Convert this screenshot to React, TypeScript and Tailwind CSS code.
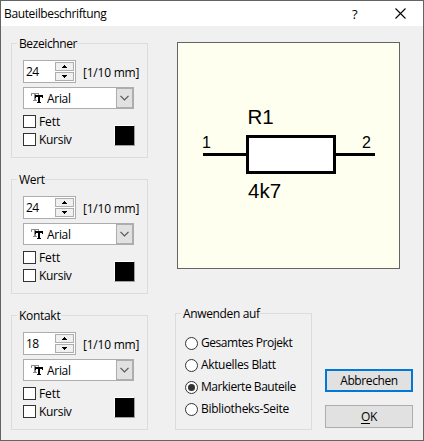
import React from "react";

function Caption({ text, className }: { text: string; className: string }) {
  return (
    <div className={`ml-[5px] -mt-[9px] mb-[-1px] h-[18px] whitespace-nowrap bg-[#f0f0f0] pl-[2px] leading-[18px] ${className}`}>
      {text}
    </div>
  );
}

function FontIcon() {
  return (
    <svg className="h-[10px] w-[12px] shrink-0" viewBox="0 0 12 10" shapeRendering="crispEdges">
      <path d="M0 0h8v3H7V1H5v6h1v1H2V7h1V1H1v2H0z" fill="#8c8c8c" />
      <path d="M4 2h8v3h-1V4H9v5h1v1H6V9h1V4H5v1H4z" fill="#000" />
    </svg>
  );
}

function SpinButton({ up }: { up?: boolean }) {
  return (
    <div className="flex h-[9px] w-[19px] items-center justify-center border border-[#adadad] bg-[#f0f0f0]">
      <svg className="h-[3px] w-[5px]" viewBox="0 0 5 3" shapeRendering="crispEdges">
        <path d={up ? "M2 0h1v1h1v1h1v1H0V2h1V1h1z" : "M0 0h5v1H4v1H3v1H2V2H1V1H0z"} fill="#000" />
      </svg>
    </div>
  );
}

function Check({ label, className }: { label: string; className: string }) {
  return (
    <label className="flex h-[13px] items-center">
      <span className="mr-[3px] h-[13px] w-[13px] border border-[#333] bg-white" />
      <span className={`leading-[13px] ${className}`}>{label}</span>
    </label>
  );
}

function FontGroup({ title, titleClass, size }: { title: string; titleClass: string; size: string }) {
  return (
    <section className="h-[115px] w-[137px] border border-[#dcdcdc]">
      <Caption text={title} className={titleClass} />
      <div className="ml-[11px] mt-[8px] flex h-[23px] items-center">
        <div className="flex h-[23px] w-[53px] items-center justify-between border border-[#abadb3] bg-white pl-[2px] pr-px">
          <span className="tracking-[-0.6px]">{size}</span>
          <div className="flex flex-col gap-px">
            <SpinButton up />
            <SpinButton />
          </div>
        </div>
        <span className="ml-[7px] mt-[2px] whitespace-nowrap tracking-[-0.23px]">[1/10 mm]</span>
      </div>
      <div className="ml-[11px] mt-[4px] flex h-[22px] w-[111px] items-center border border-[#adadad] bg-white pl-[7px]">
        <FontIcon />
        <span className="ml-[4px] mt-[2px] flex-1 tracking-[-0.3px]">Arial</span>
        <span className="flex h-[20px] w-[17px] items-center justify-center border border-[#adadad] bg-[#e1e1e1]">
          <svg className="h-[6px] w-[9px]" viewBox="0 0 9 6">
            <path d="M.5 .8l4 4 4-4" fill="none" stroke="#555" strokeWidth="1.2" />
          </svg>
        </span>
      </div>
      <div className="ml-[11px] mt-[6px] flex">
        <div className="flex w-[91px] flex-col gap-[5px]">
          <Check label="Fett" className="tracking-[-0.1px]" />
          <Check label="Kursiv" className="tracking-[-0.3px]" />
        </div>
        <span className="mt-[10px] h-[21px] w-[21px] border border-b-[#a0a0a0] border-l-white border-r-[#a0a0a0] border-t-white bg-black" />
      </div>
    </section>
  );
}

function Radio({ label, checked, className }: { label: string; checked?: boolean; className: string }) {
  return (
    <label className="flex h-[22px] items-center">
      <span className="mr-[3px] flex h-[13px] w-[13px] shrink-0 items-center justify-center rounded-full border border-[#333] bg-white">
        {checked && <span className="h-[7px] w-[7px] rounded-full bg-[#333]" />}
      </span>
      <span className={`whitespace-nowrap ${className}`}>{label}</span>
    </label>
  );
}

function Preview() {
  return (
    <div className="h-[227px] w-[223px] border border-[#646464] bg-[#fffff0]">
      <svg
        className="block h-[225px] w-[221px] font-['Liberation_Sans',Arial,sans-serif]"
        viewBox="178 43 221 225"
      >
        <path d="M203 154.500H247M335 154.500H375" stroke="#000" strokeWidth="3" />
        <rect x="247.500" y="136.500" width="87" height="36" fill="#fff" stroke="#000" strokeWidth="3" />
        <text x="247.500" y="124" fontSize="20.500">R1</text>
        <text x="248" y="198" fontSize="20.500">4k7</text>
        <text x="202" y="148" fontSize="16">1</text>
        <text x="362" y="148" fontSize="16">2</text>
      </svg>
    </div>
  );
}

export default function App() {
  return (
    <div className="flex h-[441px] w-[424px] flex-col overflow-hidden border border-[#646464] bg-[#f0f0f0] font-['Open_Sans','Noto_Sans',sans-serif] text-[12px] leading-[16px] text-black">
      <header className="flex h-[25px] shrink-0 items-center bg-white pl-[3px]">
        <h1 className="flex-1 tracking-[-0.36px]">Bauteilbeschriftung</h1>
        <span className="mr-[36px] w-[7px] text-[13px]">?</span>
        <svg className="mr-[17px] h-[11px] w-[11px]" viewBox="0 0 11 11">
          <path d="M.5 .5l10 10M10.500 .5l-10 10" stroke="#000" strokeWidth="1.100" />
        </svg>
      </header>
      <main className="flex pl-[10px]">
        <div className="mt-[17px] flex flex-col gap-[21px]">
          <FontGroup title="Bezeichner" titleClass="w-[59px] tracking-[-0.4px]" size="24" />
          <FontGroup title="Wert" titleClass="w-[27px] tracking-[-0.3px]" size="24" />
          <FontGroup title="Kontakt" titleClass="w-[44px] tracking-[-0.3px]" size="18" />
        </div>
        <div className="ml-[27px] mt-[16px]">
          <div className="ml-[2px]">
            <Preview />
          </div>
          <div className="mt-[44px] flex">
            <section className="h-[117px] w-[137px] border border-[#dcdcdc]">
              <Caption text="Anwenden auf" className="w-[79px] tracking-[-0.35px]" />
              <div className="ml-[9px] mt-[10px]">
                <Radio label="Gesamtes Projekt" className="tracking-[-0.45px]" />
                <Radio label="Aktuelles Blatt" className="tracking-[-0.35px]" />
                <Radio label="Markierte Bauteile" checked className="tracking-[-0.46px]" />
                <Radio label="Bibliotheks-Seite" className="tracking-[-0.3px]" />
              </div>
            </section>
            <div className="ml-[13px] mt-[56px] flex flex-col gap-[13px]">
              <button className="h-[23px] w-[88px] border-2 border-[#0078d7] bg-[#e1e1e1] leading-[19px] tracking-[-0.4px]">
                Abbrechen
              </button>
              <button className="h-[23px] w-[88px] border border-[#adadad] bg-[#e1e1e1] leading-[21px] tracking-[-0.3px]">
                <span className="underline underline-offset-2">O</span>K
              </button>
            </div>
          </div>
        </div>
      </main>
    </div>
  );
}
